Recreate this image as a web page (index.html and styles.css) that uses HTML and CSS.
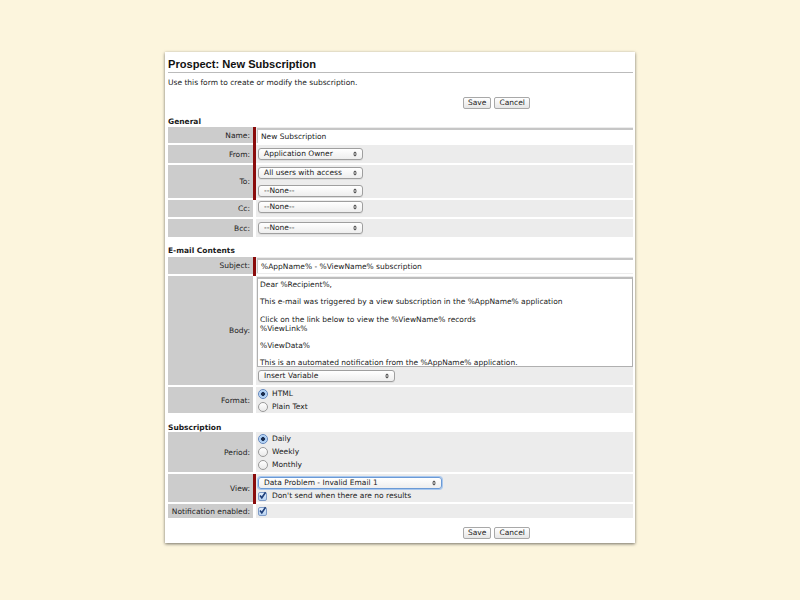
FILE: index.html
```html
<!DOCTYPE html>
<html>
<head>
<meta charset="utf-8">
<link rel="stylesheet" href="styles.css">
</head>
<body>
<div class="panel">
  <div class="title">Prospect: New Subscription</div>
  <div class="desc">Use this form to create or modify the subscription.</div>
  <div class="buttons"><span class="btn">Save</span><span class="btn">Cancel</span></div>

  <div class="section">General</div>
  <div class="row">
    <div class="lbl">Name:</div><div class="bar req"></div>
    <div class="val h16"><div class="text">New Subscription</div></div>
  </div>
  <div class="row">
    <div class="lbl">From:</div><div class="bar req"></div>
    <div class="val h18"><div class="select w104">Application Owner<svg class="arr" width="4" height="6" viewBox="0 0 4 6"><path d="M0 2.4L2 0.4L4 2.4ZM0 3.6L2 5.6L4 3.6Z" fill="#444"/></svg></div></div>
  </div>
  <div class="row">
    <div class="lbl">To:</div><div class="bar req"></div>
    <div class="val h33 stack">
      <div class="select w104">All users with access<svg class="arr" width="4" height="6" viewBox="0 0 4 6"><path d="M0 2.4L2 0.4L4 2.4ZM0 3.6L2 5.6L4 3.6Z" fill="#444"/></svg></div>
      <div class="select w104">--None--<svg class="arr" width="4" height="6" viewBox="0 0 4 6"><path d="M0 2.4L2 0.4L4 2.4ZM0 3.6L2 5.6L4 3.6Z" fill="#444"/></svg></div>
    </div>
  </div>
  <div class="row">
    <div class="lbl">Cc:</div><div class="bar"></div>
    <div class="val h17"><div class="select w104">--None--<svg class="arr" width="4" height="6" viewBox="0 0 4 6"><path d="M0 2.4L2 0.4L4 2.4ZM0 3.6L2 5.6L4 3.6Z" fill="#444"/></svg></div></div>
  </div>
  <div class="row">
    <div class="lbl">Bcc:</div><div class="bar"></div>
    <div class="val h18"><div class="select w104">--None--<svg class="arr" width="4" height="6" viewBox="0 0 4 6"><path d="M0 2.4L2 0.4L4 2.4ZM0 3.6L2 5.6L4 3.6Z" fill="#444"/></svg></div></div>
  </div>

  <div class="section s2">E-mail Contents</div>
  <div class="row">
    <div class="lbl">Subject:</div><div class="bar req"></div>
    <div class="val h17"><div class="text">%AppName% - %ViewName% subscription</div></div>
  </div>
  <div class="row">
    <div class="lbl">Body:</div><div class="bar"></div>
    <div class="val h109 body">
      <div class="area">Dear %Recipient%,<br><br>This e-mail was triggered by a view subscription in the %AppName% application<br><br>Click on the link below to view the %ViewName% records<br>%ViewLink%<br><br>%ViewData%<br><br>This is an automated notification from the %AppName% application.</div>
      <div class="select w135 ins">Insert Variable<svg class="arr" width="4" height="6" viewBox="0 0 4 6"><path d="M0 2.4L2 0.4L4 2.4ZM0 3.6L2 5.6L4 3.6Z" fill="#444"/></svg></div>
    </div>
  </div>
  <div class="row">
    <div class="lbl">Format:</div><div class="bar"></div>
    <div class="val h26 opts">
      <div class="opt"><span class="radio on"></span>HTML</div>
      <div class="opt"><span class="radio"></span>Plain Text</div>
    </div>
  </div>

  <div class="section s3">Subscription</div>
  <div class="row">
    <div class="lbl">Period:</div><div class="bar"></div>
    <div class="val h40 opts">
      <div class="opt"><span class="radio on"></span>Daily</div>
      <div class="opt"><span class="radio"></span>Weekly</div>
      <div class="opt"><span class="radio"></span>Monthly</div>
    </div>
  </div>
  <div class="row">
    <div class="lbl">View:</div><div class="bar req"></div>
    <div class="val h28 opts view">
      <div class="select w183 focus">Data Problem - Invalid Email 1<svg class="arr" width="4" height="6" viewBox="0 0 4 6"><path d="M0 2.4L2 0.4L4 2.4ZM0 3.6L2 5.6L4 3.6Z" fill="#444"/></svg></div>
      <div class="opt"><span class="check"><svg width="9" height="9" viewBox="0 0 9 9"><path d="M2 4.5L3.8 6.8L7.6 1.2" fill="none" stroke="#1f3f7a" stroke-width="1.6"/></svg></span>Don't send when there are no results</div>
    </div>
  </div>
  <div class="row">
    <div class="lbl">Notification enabled:</div><div class="bar"></div>
    <div class="val h14 opts">
      <div class="opt"><span class="check"><svg width="9" height="9" viewBox="0 0 9 9"><path d="M2 4.5L3.8 6.8L7.6 1.2" fill="none" stroke="#1f3f7a" stroke-width="1.6"/></svg></span></div>
    </div>
  </div>
  <div class="buttons b2"><span class="btn">Save</span><span class="btn">Cancel</span></div>
</div>
</body>
</html>
```
FILE: styles.css
```css
html, body { margin: 0; padding: 0; }
body {
  background: #fcf5dd;
  font-family: "DejaVu Sans", Verdana, sans-serif;
  font-size: 7.5px;
  color: #1a1a1a;
  width: 800px;
  height: 600px;
  overflow: hidden;
}
.panel {
  margin: 52px 0 0 165px;
  width: 470px;
  height: 491px;
  box-sizing: border-box;
  background: #fff;
  padding: 0 2px 0 3px;
  box-shadow: 0 1px 3px rgba(0,0,0,0.55);
}
.title {
  font: bold 11.1px "Liberation Sans", Arial, sans-serif;
  color: #111;
  padding-top: 6px;
  height: 14px;
  border-bottom: 1px solid #bbb;
}
.desc {
  margin-top: 5px;
  line-height: 9px;
  height: 9px;
}
.buttons {
  display: flex;
  gap: 3px;
  padding-left: 295px;
  margin-top: 10px;
}
.btn {
  display: inline-block;
  height: 10px;
  line-height: 10px;
  padding: 0 4px;
  border: 1px solid #a8a8a8;
  border-radius: 2px;
  background: linear-gradient(#ffffff, #e6e6e6);
  color: #222;
}
.section {
  font-weight: bold;
  margin-top: 8px;
  line-height: 9px;
  height: 10px;
}
.s2 { margin-top: 7px; height: 11px; }
.s3 { margin-top: 8px; height: 9px; }
.row {
  display: flex;
}
.lbl {
  width: 85px;
  box-sizing: border-box;
  background: #cccccc;
  border-bottom: 2px solid #fff;
  display: flex;
  align-items: center;
  justify-content: flex-end;
  padding-right: 3px;
  color: #222;
}
.bar { width: 3px; border-bottom: 2px solid #fff; }
.bar.req { background: #8a0c0c; border-bottom-color: #8a0c0c; }
.val {
  flex: 1;
  box-sizing: border-box;
  background: #ececec;
  border-bottom: 2px solid #fff;
  padding: 0 0 0 1px;
  display: flex;
  flex-direction: column;
  justify-content: center;
}
.h14 { height: 16px; }
.h16 { height: 18px; justify-content: flex-start; padding-top: 1px; }
.h17 { height: 19px; justify-content: flex-start; padding-top: 1px; }
.h18 { height: 20px; }
.h26 { height: 28px; }
.h28 { height: 30px; }
.h33 { height: 35px; }
.h40 { height: 42px; }
.h109 { height: 111px; justify-content: flex-start; padding-top: 1px; }
.stack { gap: 6px; padding-left: 2px; }
.text {
  height: 13px;
  line-height: 13px;
  background: #fff;
  border-top: 2px solid #c6c6c6;
  border-left: 1px solid #c6c6c6;
  padding-left: 3px;
}
.select {
  position: relative;
  height: 10px;
  line-height: 10px;
  box-sizing: content-box;
  border: 1px solid #9f9f9f;
  border-radius: 3px;
  background: linear-gradient(#ffffff, #eeeeee);
  padding-left: 5px;
  margin-left: 1px;
  box-shadow: 0 1px 0 rgba(0,0,0,0.06);
}
.stack .select { margin: 0; }
.w104 { width: 98px; }
.w135 { width: 130px; }
.w183 { width: 177px; }
.arr { position: absolute; right: 5px; top: 2px; }
.focus { border-color: #6b9ad6; box-shadow: 0 0 0 1px #a9c8ee; }
.area {
  height: 85px;
  background: #fff;
  border: 1px solid #b0b0b0;
  border-top: 2px solid #bdbdbd;
  padding: 2px 2px 0 2px;
  line-height: 8.7px;
}
.ins { margin: 3px 0 0 1px; }
.opts { padding-left: 2px; gap: 3px; }
.view { justify-content: flex-start; padding-top: 3px; gap: 2px; }
.opt { display: flex; align-items: center; height: 10px; line-height: 10px; }
.radio {
  width: 8px;
  height: 8px;
  border: 1px solid #9a9a9a;
  border-radius: 50%;
  background: linear-gradient(#ffffff, #e9e9e9);
  margin-right: 4px;
}
.radio.on {
  border-color: #5f86bf;
  background: radial-gradient(circle, #1c2e4f 0 1.6px, #9cc3ef 2.2px, #c9e0f8 4px);
}
.check {
  width: 9px;
  height: 9px;
  box-sizing: border-box;
  border: 1px solid #7f9cc8;
  border-radius: 2px;
  background: linear-gradient(#e2eefc, #b9d3f2);
  margin-right: 5px;
  position: relative;
}
.check svg { position: absolute; left: -1px; top: -2px; }
.opts .select { margin: 0; }
.b2 { margin-top: 7px; }
```
